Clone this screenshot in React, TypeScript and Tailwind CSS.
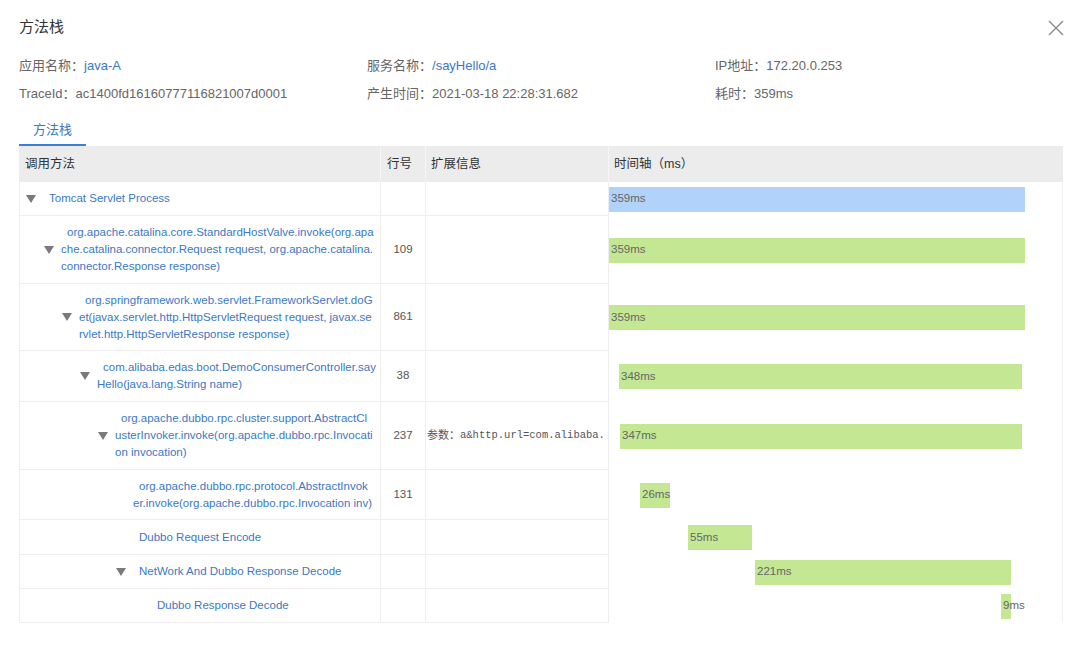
import React from "react";

type Row = {
  level: number;
  lines: string[];
  expandable: boolean;
  line?: string;
  ext?: string;
  ms: number;
  start: number;
  height: number;
  root?: boolean;
};

const ROWS: Row[] = [
  { level: 0, lines: ["Tomcat Servlet Process"], expandable: true, ms: 359, start: 0, height: 34, root: true },
  {
    level: 1,
    lines: [
      "org.apache.catalina.core.StandardHostValve.invoke(org.apa",
      "che.catalina.connector.Request request, org.apache.catalina.",
      "connector.Response response)",
    ],
    expandable: true, line: "109", ms: 359, start: 0, height: 68,
  },
  {
    level: 2,
    lines: [
      "org.springframework.web.servlet.FrameworkServlet.doG",
      "et(javax.servlet.http.HttpServletRequest request, javax.se",
      "rvlet.http.HttpServletResponse response)",
    ],
    expandable: true, line: "861", ms: 359, start: 0, height: 67,
  },
  {
    level: 3,
    lines: ["com.alibaba.edas.boot.DemoConsumerController.say", "Hello(java.lang.String name)"],
    expandable: true, line: "38", ms: 348, start: 8.6, height: 51,
  },
  {
    level: 4,
    lines: [
      "org.apache.dubbo.rpc.cluster.support.AbstractCl",
      "usterInvoker.invoke(org.apache.dubbo.rpc.Invocati",
      "on invocation)",
    ],
    expandable: true, line: "237", ext: "a&http.url=com.alibaba.", ms: 347, start: 9.5, height: 68,
  },
  {
    level: 5,
    lines: ["org.apache.dubbo.rpc.protocol.AbstractInvok", "er.invoke(org.apache.dubbo.rpc.Invocation inv)"],
    expandable: false, line: "131", ms: 26, start: 26.7, height: 50,
  },
  { level: 5, lines: ["Dubbo Request Encode"], expandable: false, ms: 55, start: 68.2, height: 35 },
  { level: 5, lines: ["NetWork And Dubbo Response Decode"], expandable: true, ms: 221, start: 126, height: 34 },
  { level: 6, lines: ["Dubbo Response Decode"], expandable: false, ms: 9, start: 338.3, height: 34 },
];

const PX_PER_MS = 416 / 359;
const FONT = "font-['Liberation_Sans','Noto_Sans_CJK_SC',sans-serif]";

function Caret() {
  return (
    <svg width="10" height="8" viewBox="0 0 10 8" className="shrink-0">
      <path d="M0 0 L10 0 L5 8 Z" fill="#7a7a7a" />
    </svg>
  );
}

function Info({ label, value, link }: { label: string; value: string; link?: boolean }) {
  return (
    <div className="flex items-center h-[28px] whitespace-nowrap">
      <span className="text-[13px] text-[#666]">{label}：</span>
      <span className={`text-[13px] ${link ? "text-[#3b78c5]" : "text-[#666]"}`}>{value}</span>
    </div>
  );
}

export default function App() {
  return (
    <div className={`w-[1080px] h-[652px] bg-white pl-[19px] pr-[17px] pt-[17px] ${FONT}`}>
      {/* title */}
      <div className="flex items-center justify-between h-[20px]">
        <div className="text-[15px] text-[#333]">方法栈</div>
        <svg width="16" height="16" viewBox="0 0 16 16" className="mt-[2px] mr-[-1px]">
          <path d="M1 1 L15 15 M15 1 L1 15" stroke="#8a8a8a" strokeWidth="1.4" />
        </svg>
      </div>

      {/* info */}
      <div className="mt-[15px] grid grid-cols-[348px_348px_1fr]">
        <Info label="应用名称" value="java-A" link />
        <Info label="服务名称" value="/sayHello/a" link />
        <Info label="IP地址" value="172.20.0.253" />
        <Info label="TraceId" value="ac1400fd16160777116821007d0001" />
        <Info label="产生时间" value="2021-03-18 22:28:31.682" />
        <Info label="耗时" value="359ms" />
      </div>

      {/* tab */}
      <div className="mt-[8px] w-[67px] h-[30px] flex flex-col">
        <div className="h-[28px] flex items-center justify-center text-[13px] text-[#3b78c5]">方法栈</div>
        <div className="h-[2px] bg-[#3d7fd6]" />
      </div>

      {/* table */}
      <div className="w-[1044px]">
        <div className="grid grid-cols-[362px_45px_183px_454px] h-[36px] bg-[#ececec] text-[12.5px] text-[#333]">
          <div className="flex items-center pl-[6px] border-r border-[#f6f6f6]">调用方法</div>
          <div className="flex items-center pl-[6px] border-r border-[#f6f6f6]">行号</div>
          <div className="flex items-center pl-[5px] border-r border-[#f6f6f6]">扩展信息</div>
          <div className="flex items-center pl-[5px]">时间轴（ms）</div>
        </div>

        {ROWS.map((r, i) => (
          <div
            key={i}
            className="grid grid-cols-[362px_45px_183px_454px]"
            style={{ height: r.height }}
          >
            <div
              className="flex items-center border-l border-r border-b border-[#eee] text-[11.5px] leading-[17px] text-[#3b78c5]"
              style={{ paddingLeft: 6 + 18 * r.level }}
            >
              <div className="w-[17px] shrink-0 flex">{r.expandable && <Caret />}</div>
              <div className="flex flex-col whitespace-nowrap">
                {r.lines.map((l, j) => (
                  <div key={j} className={j === 0 ? "ml-[6px]" : ""}>
                    {l}
                  </div>
                ))}
              </div>
            </div>
            <div className="flex items-center justify-center border-r border-b border-[#eee] text-[11.5px] text-[#555]">
              {r.line}
            </div>
            <div className="flex items-center pl-[1px] border-r border-b border-[#eee] whitespace-nowrap">
              {r.ext && (
                <>
                  <span className="text-[11px] text-[#555]">参数：</span>
                  <span className="text-[10.5px] text-[#555] font-['Liberation_Mono',monospace]">{r.ext}</span>
                </>
              )}
            </div>
            <div className="flex items-center border-r border-[#f0f0f0]">
              <div
                className={`h-[25px] flex items-center pl-[2px] text-[11.5px] text-[#666] whitespace-nowrap ${
                  r.root ? "bg-[#b1d3f9]" : "bg-[#c4e794]"
                }`}
                style={{ marginLeft: Math.round(r.start * PX_PER_MS), width: Math.max(10, Math.round(r.ms * PX_PER_MS)) }}
              >
                {r.ms}ms
              </div>
            </div>
          </div>
        ))}
      </div>
    </div>
  );
}
